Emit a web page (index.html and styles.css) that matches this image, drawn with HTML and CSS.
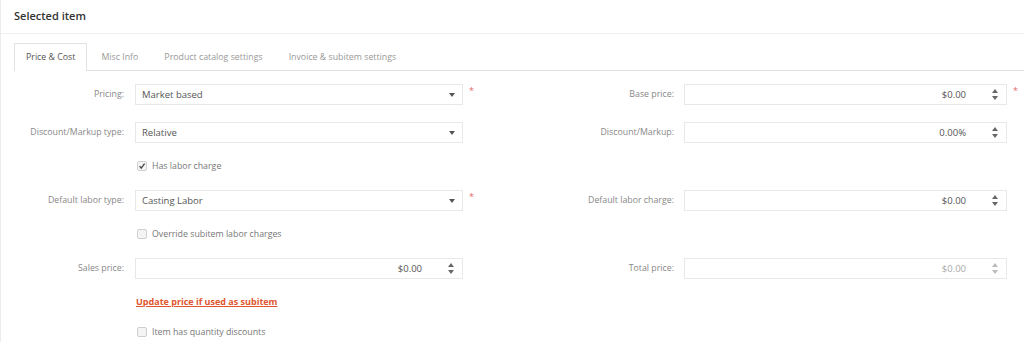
FILE: index.html
```html
<!DOCTYPE html>
<html lang="en">
<head>
<meta charset="utf-8">
<title>Selected item</title>
<link rel="stylesheet" href="styles.css">
</head>
<body>
<div class="panel">
  <div class="panel-head">Selected item</div>
  <ul class="tabs">
    <li class="tab active">Price &amp; Cost</li>
    <li class="tab">Misc Info</li>
    <li class="tab">Product catalog settings</li>
    <li class="tab">Invoice &amp; subitem settings</li>
  </ul>
  <div class="form">
    <div class="row">
      <div class="field left">
        <span class="label">Pricing:</span>
        <div class="control select"><span class="val">Market based</span><span class="caret"></span></div>
        <span class="req">*</span>
      </div>
      <div class="field right">
        <span class="label">Base price:</span>
        <div class="control num"><span class="val">$0.00</span><span class="spin"><i class="up"></i><i class="down"></i></span></div>
        <span class="req">*</span>
      </div>
    </div>
    <div class="row">
      <div class="field left">
        <span class="label">Discount/Markup type:</span>
        <div class="control select"><span class="val">Relative</span><span class="caret"></span></div>
        <span class="req"></span>
      </div>
      <div class="field right">
        <span class="label">Discount/Markup:</span>
        <div class="control num"><span class="val">0.00%</span><span class="spin"><i class="up"></i><i class="down"></i></span></div>
        <span class="req"></span>
      </div>
    </div>
    <div class="check-row"><span class="box checked"><svg viewBox="0 0 10 10" width="10" height="10"><path d="M2.6 5.2 L4.2 7.2 L7.6 2.6" fill="none" stroke="#444" stroke-width="1.3"/></svg></span>Has labor charge</div>
    <div class="row">
      <div class="field left">
        <span class="label">Default labor type:</span>
        <div class="control select"><span class="val">Casting Labor</span><span class="caret"></span></div>
        <span class="req">*</span>
      </div>
      <div class="field right">
        <span class="label">Default labor charge:</span>
        <div class="control num"><span class="val">$0.00</span><span class="spin"><i class="up"></i><i class="down"></i></span></div>
        <span class="req"></span>
      </div>
    </div>
    <div class="check-row"><span class="box"></span>Override subitem labor charges</div>
    <div class="row">
      <div class="field left">
        <span class="label">Sales price:</span>
        <div class="control num"><span class="val">$0.00</span><span class="spin"><i class="up"></i><i class="down"></i></span></div>
        <span class="req"></span>
      </div>
      <div class="field right">
        <span class="label">Total price:</span>
        <div class="control num disabled"><span class="val">$0.00</span><span class="spin"><i class="up"></i><i class="down"></i></span></div>
        <span class="req"></span>
      </div>
    </div>
    <div class="link-row"><a class="update-link" href="#">Update price if used as subitem</a></div>
    <div class="check-row"><span class="box"></span>Item has quantity discounts</div>
  </div>
</div>
</body>
</html>
```
FILE: styles.css
```css
* { box-sizing: border-box; }
html, body { margin: 0; padding: 0; background: #fff; }
body {
  font-family: "Open Sans", "Liberation Sans", sans-serif;
  font-size: 8.8px;
  color: #555;
  width: 1024px;
  height: 342px;
  overflow: hidden;
}
.panel {
  border-left: 1px solid #ececec;
  height: 342px;
}
.panel-head {
  height: 34px;
  line-height: 32px;
  padding-left: 13px;
  font-size: 11px;
  font-weight: 600;
  color: #333;
  border-bottom: 1px solid #f0f0f0;
}
.tabs {
  list-style: none;
  margin: 9px 0 0 13px;
  padding: 0;
  display: flex;
  border-bottom: 1px solid #e2e2e2;
  height: 28px;
}
.tab {
  height: 28px;
  line-height: 27px;
  padding: 0 11px;
  margin-right: 2px;
  color: #999;
  border: 1px solid transparent;
  border-bottom: none;
}
.tab.active {
  color: #555;
  border-color: #e2e2e2;
  background: #fff;
  margin-bottom: -1px;
}
.form { padding-top: 13px; }
.row {
  display: flex;
  height: 21px;
  margin-bottom: 17px;
}
.row:nth-of-type(3) { margin-bottom: 16px; }
.field { display: flex; align-items: stretch; }
.field.left { width: 511px; }
.field.right { flex: 1; }
.label {
  text-align: right;
  color: #888;
  line-height: 21px;
  white-space: nowrap;
}
.field.left .label { width: 123px; margin-right: 11px; }
.field.right .label { width: 162px; margin-right: 10px; }
.control {
  position: relative;
  height: 21px;
  border: 1px solid #e8e8e8;
  background: #fff;
  line-height: 19px;
  font-size: 9.5px;
  color: #555;
}
.field.left .control { width: 328px; }
.field.right .control { width: 323px; }
.select { padding-left: 6px; }
.num { text-align: right; padding-right: 40px; }
.num.disabled .val { color: #aaa; }
.caret {
  position: absolute;
  right: 7px;
  top: 8px;
  width: 0; height: 0;
  border-left: 3px solid transparent;
  border-right: 3px solid transparent;
  border-top: 4px solid #555;
}
.spin {
  position: absolute;
  right: 8px;
  top: 4px;
  width: 6px;
  height: 11px;
  display: flex;
  flex-direction: column;
  justify-content: space-between;
}
.spin i {
  display: block;
  width: 0; height: 0;
  border-left: 3px solid transparent;
  border-right: 3px solid transparent;
}
.spin .up { border-bottom: 4px solid #666; }
.spin .down { border-top: 4px solid #666; }
.disabled .spin .up { border-bottom-color: #bbb; }
.disabled .spin .down { border-top-color: #bbb; }
.req {
  color: #e06868;
  font-size: 9px;
  line-height: 9px;
  padding-left: 6px;
  padding-top: 2px;
}
.check-row {
  display: flex;
  align-items: center;
  height: 12px;
  margin-bottom: 18px;
  padding-left: 136px;
  color: #777;
}
.box {
  width: 10px;
  height: 10px;
  border: 1px solid #cfcfcf;
  border-radius: 2px;
  background: #f4f4f4;
  margin-right: 5px;
  display: flex;
  align-items: center;
  justify-content: center;
}
.box svg { display: block; flex: none; }
.link-row {
  height: 12px;
  line-height: 12px;
  margin-bottom: 18px;
  padding-left: 135px;
}
.update-link {
  color: #e0552e;
  font-weight: 700;
  font-size: 9px;
  text-decoration: underline;
}
```
